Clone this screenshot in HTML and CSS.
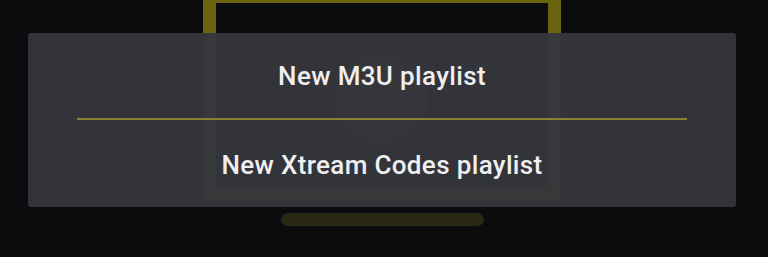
FILE: index.html
```html
<!DOCTYPE html>
<html>
<head>
<meta charset="utf-8">
<link rel="stylesheet" href="styles.css">
</head>
<body>
<div class="stage">
  <div class="frame">
    <div class="logo"></div>
  </div>
  <div class="pill"></div>
</div>
<div class="dialog">
  <div class="option">New M3U playlist</div>
  <div class="divider"></div>
  <div class="option option-last">New Xtream Codes playlist</div>
</div>
</body>
</html>
```

FILE: styles.css
```css
html, body {
  margin: 0;
  padding: 0;
}
body {
  width: 768px;
  height: 257px;
  overflow: hidden;
  background: #0c0c0f;
  font-family: Roboto, "Liberation Sans", sans-serif;
  position: relative;
}
.stage {
  width: 764px;
  display: flex;
  flex-direction: column;
  align-items: center;
}
.frame {
  box-sizing: border-box;
  width: 358px;
  height: 210px;
  margin-top: -10px;
  border: 13px solid #6a6410;
  display: flex;
  justify-content: center;
  padding-top: 52px;
}
.logo {
  width: 92px;
  height: 88px;
  border-radius: 50%;
  background: #3d3722;
}
.pill {
  width: 203px;
  height: 13px;
  margin-top: 13px;
  border-radius: 7px;
  background: #2b2914;
}
.dialog {
  position: absolute;
  top: 33px;
  left: 28px;
  width: 708px;
  height: 174px;
  border-radius: 3px;
  background: rgba(53, 54, 60, 0.96);
  display: flex;
  flex-direction: column;
}
.option {
  height: 85px;
  display: flex;
  align-items: center;
  justify-content: center;
  color: #efeff0;
  font-size: 26px;
  font-weight: 500;
  letter-spacing: 0.35px;
}
.option-last {
  height: 87px;
  padding-top: 2px;
  box-sizing: border-box;
}
.divider {
  height: 2px;
  margin: 0 49px;
  background: #8a8136;
}
```
